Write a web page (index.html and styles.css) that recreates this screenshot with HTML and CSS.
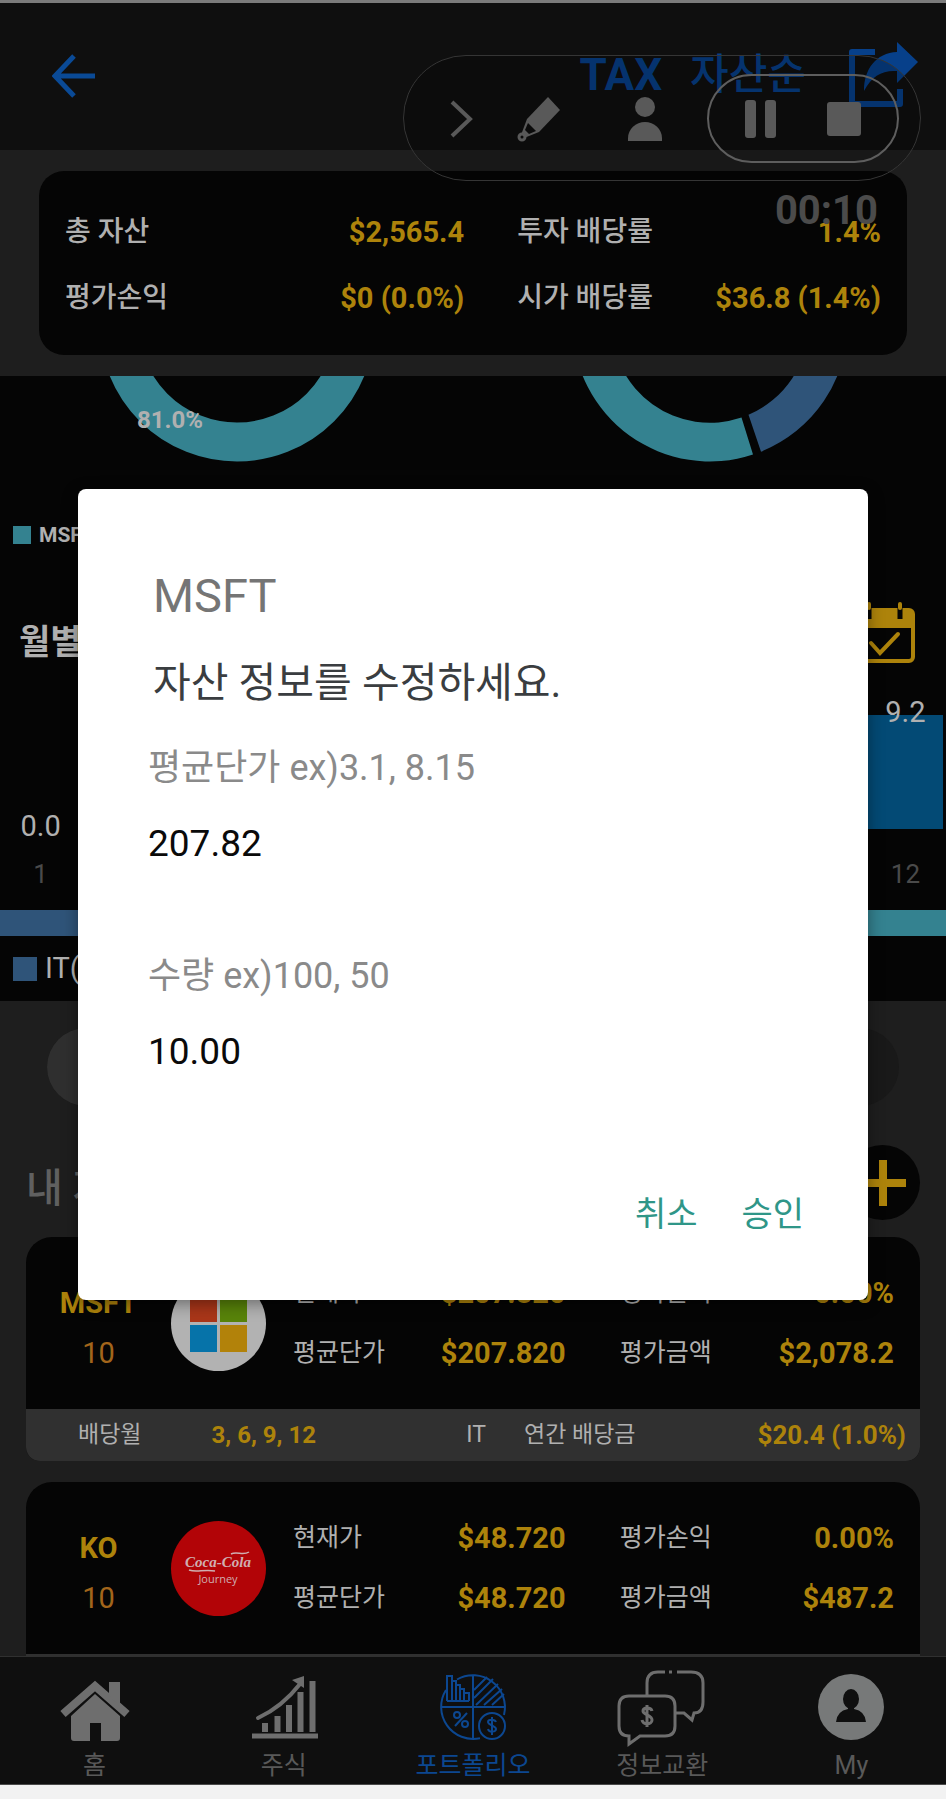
FILE: index.html
```html
<!DOCTYPE html>
<html lang="ko">
<head>
    <meta charset="UTF-8">
    <meta name="viewport" content="width=device-width, initial-scale=1.0">
    <title>포트폴리오</title>
    <link rel="stylesheet" href="styles.css">
</head>
<body>
    <div class="screen">
        <header class="topbar">
            <button class="icon-btn" aria-label="뒤로">
                <svg width="44" height="44" viewBox="0 0 44 44"><path d="M22 2L3 22l19 20M3 22h40" fill="none" stroke="#0a4a96" stroke-width="5"/></svg>
            </button>
            <div class="topbar-actions">
                <button class="tax-btn">TAX</button>
                <button class="sort-btn">자산순</button>
                <button class="icon-btn share-btn" aria-label="공유">
                    <svg width="69" height="66" viewBox="0 0 69 66">
                        <path d="M26 10H3v52h48V47" fill="none" stroke="#07408a" stroke-width="6" stroke-linejoin="round"/>
                        <path d="M48 0l21 20-21 21V29c-15-1-25 5-33 20 0-22 12-38 33-39z" fill="#07408a"/>
                    </svg>
                </button>
            </div>
        </header>

        <!-- Summary -->
        <section class="summary">
            <dl class="summary-card">
                <dt>총 자산</dt><dd>$2,565.4</dd>
                <dt>투자 배당률</dt><dd>1.4%</dd>
                <dt>평가손익</dt><dd>$0 (0.0%)</dd>
                <dt>시가 배당률</dt><dd>$36.8 (1.4%)</dd>
            </dl>
        </section>

        <!-- Charts -->
        <section class="charts">
            <div class="donuts">
                <svg width="280" height="90" viewBox="-140 52 280 90">
                    <circle r="118" fill="none" stroke="#348290" stroke-width="39"/>
                    <text class="donut-label" x="-100" y="104">81.0%</text>
                </svg>
                <svg width="280" height="90" viewBox="-140 52 280 90">
                    <path d="M-137.500 0A137.500 137.500 0 0 0 43 130.600L31.500 93.600A98.500 98.500 0 0 1-98.500 0z" fill="#348290"/>
                    <path d="M51 127.700A137.500 137.500 0 0 0 137.500 0H98.500A98.500 98.500 0 0 1 38.500 90.700z" fill="#2f5479"/>
                </svg>
            </div>
            <div class="stock-legend"><i class="swatch teal"></i>MSFT</div>
            <div class="monthly-head">
                <h2>월별</h2>
                <button class="icon-btn" aria-label="달력">
                    <svg width="61" height="61" viewBox="0 0 61 61">
                        <rect x="2" y="8" width="57" height="51" rx="4" fill="none" stroke="#ad830b" stroke-width="4"/>
                        <path d="M2 8h57v18H2z" fill="#ad830b"/>
                        <path d="M15 5v12M46 5v12" stroke="#050505" stroke-width="5"/>
                        <path d="M15 2v4M46 2v4M17 41l9 10 18-19" fill="none" stroke="#ad830b" stroke-width="4" stroke-linecap="round"/>
                    </svg>
                </button>
            </div>
            <div class="bars">
                <div class="bar-col"><span>0.0</span><div class="bar" style="height: 0px"></div></div>
                <div class="bar-col"><span>9.2</span><div class="bar" style="height: 114px"></div></div>
            </div>
            <div class="months"><span>1</span><span>12</span></div>
            <div class="sector-bar">
                <div class="blue" style="width: 81%"></div>
                <div class="teal" style="width: 19%"></div>
            </div>
            <div class="sector-legend"><i class="swatch blue"></i>IT(81%)</div>
        </section>

        <!-- My stocks -->
        <section class="stocks">
            <div class="segment"><span class="on"></span><span></span></div>
            <div class="stocks-head">
                <h2>내 자산</h2>
                <button class="add-btn" aria-label="추가">
                    <svg width="46" height="46" viewBox="0 0 46 46"><path d="M23 0v46M0 23h46" stroke="#ad830b" stroke-width="8"/></svg>
                </button>
            </div>

            <article class="stock">
                <div class="stock-main">
                    <div class="ticker"><b>MSFT</b><span>10</span></div>
                    <svg class="logo" width="95" height="95" viewBox="0 0 95 95">
                        <circle cx="47.500" cy="47.500" r="47.500" fill="#b2b2b2"/>
                        <path d="M19 19h27v27H19z" fill="#a93619"/>
                        <path d="M49 19h27v27H49z" fill="#58830a"/>
                        <path d="M19 49h27v27H19z" fill="#0673a9"/>
                        <path d="M49 49h27v27H49z" fill="#b2820a"/>
                    </svg>
                    <dl class="figures">
                        <dt>현재가</dt><dd>$207.820</dd>
                        <dt>평가손익</dt><dd>0.00%</dd>
                        <dt>평균단가</dt><dd>$207.820</dd>
                        <dt>평가금액</dt><dd>$2,078.2</dd>
                    </dl>
                </div>
                <div class="stock-foot">
                    <span>배당월</span>
                    <b class="pay-months">3, 6, 9, 12</b>
                    <span class="sector">IT</span>
                    <span>연간 배당금</span>
                    <b class="yearly">$20.4 (1.0%)</b>
                </div>
            </article>

            <article class="stock cut">
                <div class="stock-main">
                    <div class="ticker"><b>KO</b><span>10</span></div>
                    <svg class="logo" width="95" height="95" viewBox="0 0 95 95">
                        <circle cx="47.500" cy="47.500" r="47.500" fill="#b20407"/>
                        <text class="coke" x="47" y="46" text-anchor="middle">Coca-Cola</text>
                        <path d="M18 49c8 3 14-1 26 1M60 33c6-3 12 2 18-2" fill="none" stroke="#d0aeb0" stroke-width="1.500"/>
                        <text class="journey" x="47" y="62" text-anchor="middle">Journey</text>
                    </svg>
                    <dl class="figures">
                        <dt>현재가</dt><dd>$48.720</dd>
                        <dt>평가손익</dt><dd>0.00%</dd>
                        <dt>평균단가</dt><dd>$48.720</dd>
                        <dt>평가금액</dt><dd>$487.2</dd>
                    </dl>
                </div>
            </article>
        </section>

        <nav class="tabs">
            <a href="#home">
                <svg width="70" height="76" viewBox="0 0 70 76">
                    <path d="M3 42L35 14l32 28" fill="none" stroke="#6e6e6e" stroke-width="8"/>
                    <path d="M49 10h11v24L49 24z" fill="#6e6e6e"/>
                    <path d="M35 22l25 22v22q0 3-3 3H41V51H30v18H14q-3 0-3-3V44z" fill="#6e6e6e"/>
                </svg>
                홈
            </a>
            <a href="#stocks">
                <svg width="70" height="76" viewBox="0 0 70 76">
                    <path d="M16 60V51M28.500 60V44M40 60V33M51.500 60V20M63.500 60V9" stroke="#6e6e6e" stroke-width="6"/>
                    <path d="M3 64h66" stroke="#6e6e6e" stroke-width="5"/>
                    <path d="M9 46Q33 35 51 12" fill="none" stroke="#6e6e6e" stroke-width="4" stroke-linecap="round"/>
                    <path d="M43 8l12-4v12z" fill="#6e6e6e"/>
                </svg>
                주식
            </a>
            <a href="#portfolio" class="active">
                <svg width="70" height="76" viewBox="0 0 70 76" fill="none" stroke="#0c4790" stroke-width="2">
                    <path d="M19 7.500A32 32 0 0 1 66 43M42 66.200A32 32 0 0 1 8 18M35 3v64M3 35h64"/>
                    <path d="M9 29V4h5v25M14 9h4v20M18 13h4v16M22 17h4v12M26 21h5v8M9 29h22"/>
                    <path d="M36 18L49 5M36 26L55 7M38 33L60 12M46 33l18-16M54 33l12-11"/>
                    <circle cx="19" cy="43" r="3"/><circle cx="27" cy="52" r="3"/><path d="M29 41L17 54"/>
                    <circle cx="54" cy="54" r="13"/>
                    <path d="M58 50c-1-3-8-3-8 0s8 4 8 7-7 4-8 0M54 45v18"/>
                </svg>
                포트폴리오
            </a>
            <a href="#info">
                <svg width="90" height="76" viewBox="0 0 90 76" fill="none" stroke="#6e6e6e" stroke-width="3">
                    <path d="M30 23V11Q30 0 41 0H48M52 0h3M60 0H74Q86 0 86 11V30Q86 41 77 41L75 48 67 41H59"/>
                    <path d="M12 24H48Q58 24 58 34V54Q58 64 48 64H23L12 72V64Q2 64 2 54V34Q2 24 12 24z"/>
                    <path d="M35 39c-1-4-9-4-9 0s9 4 9 9-9 5-10 0M30 33v22"/>
                </svg>
                정보교환
            </a>
            <a href="#my">
                <svg width="70" height="76" viewBox="0 0 70 76">
                    <circle cx="35" cy="35" r="33" fill="#777979"/>
                    <ellipse cx="35" cy="27" rx="8" ry="10" fill="#0f0f0f"/>
                    <path d="M32 33h6v4q11 2 12 13H20q1-11 12-13z" fill="#0f0f0f"/>
                </svg>
                My
            </a>
        </nav>

        <!-- Screen recorder -->
        <div class="recorder">
            <div class="recorder-bar">
                <button class="icon-btn" aria-label="접기">
                    <svg width="24" height="46" viewBox="0 0 24 46"><path d="M3 6l18 17L3 40" fill="none" stroke="#595959" stroke-width="4"/></svg>
                </button>
                <button class="icon-btn pencil-btn" aria-label="그리기">
                    <svg width="44" height="46" viewBox="0 0 44 46">
                        <path d="M31 1l12 13-21 22-15 6-3-3 6-16z" fill="#595959"/>
                        <path d="M11 27l8 8-7 3-4-4z" fill="#0b0b0b"/>
                        <circle cx="5" cy="41" r="3" fill="#0b0b0b" stroke="#595959" stroke-width="3"/>
                    </svg>
                </button>
                <button class="icon-btn" aria-label="카메라">
                    <svg width="36" height="46" viewBox="0 0 36 46"><circle cx="18" cy="11" r="10" fill="#595959"/><path d="M1 45V42a17 16 0 0 1 34 0v3z" fill="#595959"/></svg>
                </button>
                <div class="recorder-controls">
                    <button class="icon-btn" aria-label="일시정지">
                        <svg width="32" height="38" viewBox="0 0 32 38"><rect width="11" height="38" rx="3" fill="#595959"/><rect x="20" width="11" height="38" rx="3" fill="#595959"/></svg>
                    </button>
                    <button class="icon-btn" aria-label="정지">
                        <svg width="34" height="34" viewBox="0 0 34 34"><rect width="34" height="34" rx="3" fill="#595959"/></svg>
                    </button>
                </div>
            </div>
            <div class="recorder-time">00:10</div>
        </div>

        <!-- Edit dialog -->
        <div class="overlay">
            <form class="dialog" role="dialog" aria-labelledby="dialog-title">
                <h1 id="dialog-title">MSFT</h1>
                <p>자산 정보를 수정하세요.</p>
                <div class="field">
                    <label for="price">평균단가 ex)3.1, 8.15</label>
                    <input id="price" type="text" value="207.82">
                </div>
                <div class="field">
                    <label for="count">수량 ex)100, 50</label>
                    <input id="count" type="text" value="10.00">
                </div>
                <div class="dialog-actions">
                    <button type="button">취소</button>
                    <button type="button">승인</button>
                </div>
            </form>
        </div>
    </div>
</body>
</html>
```
FILE: styles.css
```css
* {
    box-sizing: border-box;
    margin: 0;
    padding: 0;
}

body {
    font-family: Roboto, "Noto Sans CJK KR", sans-serif;
    background-color: #f2f2f2;
    color: #b0b0b0;
}

button {
    font: inherit;
    color: inherit;
    background: none;
    border: none;
    cursor: pointer;
}

svg {
    display: block;
}

.screen {
    position: relative;
    overflow: hidden;
    background-color: #1e1e1e;
    border-top: 3px solid #7b7b7b;
}

/* Top bar */
.topbar {
    display: flex;
    justify-content: space-between;
    align-items: flex-start;
    min-height: 147px;
    padding: 39px 28px 0 52px;
    background-color: #0f0f0f;
    color: #07408a;
}

.topbar > .icon-btn {
    margin-top: 12px;
}

.topbar-actions {
    display: flex;
    align-items: flex-start;
    font-weight: bold;
    line-height: 66px;
}

.tax-btn {
    font-size: 44px;
    margin-right: 28px;
}

.sort-btn {
    font-size: 42px;
    font-weight: 500;
    margin-right: 43px;
}

/* Summary */
.summary {
    padding: 21px 39px;
}

.summary-card {
    display: grid;
    grid-template-columns: 110px 8fr 150px 5fr;
    padding: 28px 26px 24px;
    border-radius: 25px;
    background-color: #050505;
    font-size: 29px;
    line-height: 66px;
}

.summary-card dt {
    font-size: 28px;
    font-weight: 500;
    white-space: nowrap;
}

.summary-card dd {
    text-align: right;
    font-weight: bold;
    color: #ad830b;
    white-space: nowrap;
}

.summary-card dd:nth-of-type(odd) {
    padding-right: 53px;
}

.summary-card dd:nth-of-type(even) {
    margin-left: -20px;
}

/* Charts */
.charts {
    background-color: #050505;
}

.donuts {
    display: grid;
    grid-template-columns: 1fr 1fr;
    justify-items: center;
}

.donut-label {
    font-size: 24px;
    font-weight: bold;
    fill: #b0b0b0;
}

.teal {
    background-color: #348290;
}

.blue {
    background-color: #2f5479;
}

.stock-legend,
.sector-legend {
    display: flex;
    align-items: center;
    padding-left: 13px;
}

.stock-legend {
    gap: 8px;
    margin-top: 56px;
    font-size: 21px;
    font-weight: bold;
    line-height: 26px;
}

.stock-legend .swatch {
    width: 18px;
    height: 18px;
}

.monthly-head {
    display: flex;
    justify-content: space-between;
    align-items: flex-end;
    margin-top: 54px;
    padding: 0 31px 0 19px;
}

.monthly-head h2 {
    font-size: 34px;
    line-height: 42px;
}

.bars,
.months {
    display: flex;
    justify-content: space-between;
    padding: 0 3px;
    text-align: center;
}

.bars {
    align-items: flex-end;
    margin-top: 35px;
    font-size: 29px;
}

.bar-col,
.months span {
    width: 8%;
}

.bar-col span {
    display: block;
    position: relative;
    line-height: 28px;
    margin-bottom: -11px;
}

.bar {
    background-color: #034a75;
}

.months {
    margin-top: 31px;
    font-size: 26px;
    line-height: 28px;
    color: #4a4a4a;
}

.sector-bar {
    display: flex;
    height: 26px;
    margin-top: 22px;
}

.sector-legend {
    gap: 8px;
    padding-top: 19px;
    padding-bottom: 19px;
    font-size: 29px;
    line-height: 27px;
}

.sector-legend .swatch {
    width: 24px;
    height: 24px;
}

/* Stocks */
.stocks {
    padding: 27px 26px 0;
}

.segment {
    display: flex;
    height: 78px;
    margin: 0 21px;
    border-radius: 39px;
    background-color: #191919;
}

.segment span {
    flex: 1;
}

.segment .on {
    border-radius: 39px;
    background-color: #2f2f2f;
}

.stocks-head {
    display: flex;
    justify-content: space-between;
    align-items: center;
    margin: 39px 0 17px;
}

.stocks-head h2 {
    padding-top: 12px;
    font-size: 40px;
    font-weight: 500;
    line-height: 44px;
    color: #606060;
}

.add-btn {
    display: flex;
    justify-content: center;
    align-items: center;
    width: 75px;
    height: 75px;
    border-radius: 50%;
    background-color: #050505;
}

.stock {
    margin-bottom: 21px;
    border-radius: 26px 26px 14px 14px;
    overflow: hidden;
    background-color: #050505;
}

.stock.cut {
    margin-bottom: 0;
    border-bottom: 2px solid #303030;
    border-radius: 26px 26px 0 0;
}

.stock-main {
    display: flex;
    align-items: center;
    padding: 26px 26px 26px 0;
}

.ticker {
    display: flex;
    flex-direction: column;
    width: 145px;
    padding-top: 10px;
    text-align: center;
    font-size: 29px;
    line-height: 50px;
    color: #a2651b;
}

.ticker b {
    color: #ad830b;
}

.coke {
    font-family: "Liberation Serif", serif;
    font-size: 15px;
    font-style: italic;
    font-weight: bold;
    fill: #d0aeb0;
}

.journey {
    font-family: "Open Sans", sans-serif;
    font-size: 11px;
    fill: #d0aeb0;
}

.figures {
    flex: 1;
    display: grid;
    grid-template-columns: 100px 13fr 100px 10fr;
    padding-left: 27px;
    font-size: 29px;
    line-height: 60px;
}

.figures dt {
    font-size: 25px;
    white-space: nowrap;
}

.figures dd {
    text-align: right;
    font-weight: bold;
    color: #ad830b;
}

.figures dd:nth-of-type(odd) {
    padding-right: 54px;
}

.stock-foot {
    display: flex;
    align-items: center;
    padding: 0 14px 0 52px;
    background-color: #303030;
    font-size: 23px;
    line-height: 52px;
}

.stock-foot b {
    color: #ad830b;
}

.stock-foot .pay-months {
    margin-left: 70px;
    font-size: 24px;
}

.stock-foot .sector {
    margin-left: auto;
    margin-right: 38px;
}

.stock-foot .yearly {
    margin-left: 122px;
    font-size: 26px;
}

/* Bottom tabs */
.tabs {
    display: grid;
    grid-template-columns: repeat(5, 1fr);
    padding-top: 15px;
    border-top: 1px solid #303030;
    border-bottom: 1px solid #4a4a4a;
    background-color: #0f0f0f;
}

.tabs a {
    display: flex;
    flex-direction: column;
    align-items: center;
    font-size: 25px;
    line-height: 36px;
    color: #595959;
    text-decoration: none;
}

.tabs svg {
    overflow: visible;
}

.tabs .active {
    color: #0c4790;
}

/* Screen recorder, floats over the top bar */
.recorder {
    position: absolute;
    top: 52px;
    right: 25px;
    color: #4b4b4b;
}

.recorder-bar {
    display: flex;
    align-items: center;
    gap: 44px;
    padding: 18px 21px 17px 45px;
    border: 1px solid #353535;
    border-radius: 63px;
    background-color: rgba(0, 0, 0, 0.2);
}

.pencil-btn {
    margin-right: 22px;
}

.recorder-controls {
    display: flex;
    justify-content: space-between;
    align-items: center;
    width: 192px;
    height: 89px;
    padding: 0 36px;
    border: 2px solid #5e5e5e;
    border-radius: 45px;
}

.recorder-time {
    padding-right: 43px;
    text-align: right;
    font-size: 40px;
    font-weight: bold;
    line-height: 60px;
}

/* Edit dialog */
.overlay {
    position: absolute;
    inset: 0;
    display: flex;
    align-items: center;
    padding: 0 78px;
}

.dialog {
    flex: 1;
    padding: 79px 64px 64px 70px;
    border-radius: 8px;
    background-color: #fff;
    box-shadow: 0 4px 16px rgba(0, 0, 0, 0.4);
}

.dialog h1 {
    padding-left: 5px;
    font-size: 47px;
    font-weight: normal;
    line-height: 56px;
    color: #757575;
}

.dialog p {
    margin: 31px 0 35px;
    padding-left: 5px;
    font-size: 41px;
    line-height: 56px;
    color: #3a3d40;
}

.field {
    display: flex;
    flex-direction: column;
    gap: 32px;
    margin-bottom: 88px;
    font-size: 36px;
    line-height: 44px;
}

.field label {
    color: #8a8a8a;
}

.field input {
    width: 100%;
    height: 44px;
    border: none;
    outline: none;
    background: none;
    font: inherit;
    font-size: 37px;
    color: #0a0a0a;
}

.dialog-actions {
    display: flex;
    justify-content: flex-end;
    gap: 44px;
    margin-top: 118px;
    font-size: 34px;
    line-height: 44px;
}

.dialog-actions button {
    color: #2f9688;
}
```
